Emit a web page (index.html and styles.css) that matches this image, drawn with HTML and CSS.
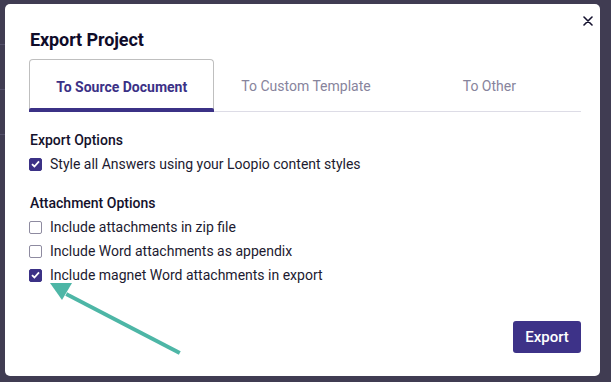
FILE: index.html
```html
<!DOCTYPE html>
<html>
<head>
<meta charset="utf-8">
<link rel="stylesheet" href="styles.css">
</head>
<body>
<div class="backdrop">
  <div class="side">
    <span class="side-row"></span>
    <span class="side-row"></span>
    <span class="side-row"></span>
  </div>
  <div class="modal">
    <button class="close" aria-label="Close">
      <svg width="10" height="10" viewBox="0 0 10 10"><path d="M1 1 L9 9 M9 1 L1 9" stroke="#14112e" stroke-width="1.6" stroke-linecap="round"/></svg>
    </button>
    <h1 class="title">Export Project</h1>
    <div class="tabs">
      <div class="tab active">To Source Document</div>
      <div class="tab">To Custom Template</div>
      <div class="tab">To Other</div>
    </div>
    <div class="section">
      <h2 class="section-title">Export Options</h2>
      <label class="option"><span class="box checked"><svg width="9" height="8" viewBox="0 0 9 8"><path d="M1 4.2 L3.4 6.5 L8 1.3" fill="none" stroke="#fff" stroke-width="1.8"/></svg></span>Style all Answers using your Loopio content styles</label>
    </div>
    <div class="section second">
      <h2 class="section-title">Attachment Options</h2>
      <label class="option"><span class="box"></span>Include attachments in zip file</label>
      <label class="option"><span class="box"></span>Include Word attachments as appendix</label>
      <label class="option"><span class="box checked"><svg width="9" height="8" viewBox="0 0 9 8"><path d="M1 4.2 L3.4 6.5 L8 1.3" fill="none" stroke="#fff" stroke-width="1.8"/></svg></span>Include magnet Word attachments in export</label>
    </div>
    <div class="footer">
      <button class="export">Export</button>
    </div>
    <svg class="arrow" width="140" height="80" viewBox="0 0 140 80">
      <line x1="18" y1="12" x2="128" y2="69" stroke="#4db6a6" stroke-width="4" stroke-linecap="square"/>
      <polygon points="0,0 22,0 12,17" fill="#4db6a6"/>
    </svg>
  </div>
</div>
</body>
</html>
```
FILE: styles.css
```css
* { box-sizing: border-box; }
html, body { margin: 0; padding: 0; }
body {
  background: #403c52;
  font-family: Roboto, "Liberation Sans", sans-serif;
  width: 611px;
  height: 382px;
  overflow: hidden;
}
.backdrop {
  position: relative;
  width: 611px;
  height: 382px;
  padding: 4px 11px 6px 5px;
}
.side {
  position: absolute;
  left: 0;
  top: 0;
  width: 5px;
  height: 382px;
  display: flex;
  flex-direction: column;
  overflow: hidden;
}
.side-row {
  height: 45px;
  border-bottom: 1px solid #54506a;
}
.modal {
  position: relative;
  width: 595px;
  height: 372px;
  background: #fff;
  border-radius: 5px;
  padding: 25px 19px 0 24px;
}
.close {
  position: absolute;
  top: 12px;
  right: 7px;
  width: 10px;
  height: 10px;
  padding: 0;
  border: 0;
  background: none;
  display: flex;
}
.title {
  margin: 0 0 0 1px;
  font-size: 18px;
  font-weight: 700;
  color: #0f0c29;
  line-height: 22px;
  letter-spacing: -0.1px;
}
.tabs {
  margin-top: 8px;
  display: flex;
  width: 552px;
  border-bottom: 1px solid #dddce6;
  height: 53px;
}
.tab {
  flex: 1;
  display: flex;
  align-items: center;
  justify-content: center;
  font-size: 14px;
  color: #87849c;
  padding-top: 2px;
}
.tab.active {
  position: relative;
  border: 1px solid #bfbfbf;
  border-bottom: 0;
  border-radius: 4px 4px 0 0;
  color: #3b3186;
  font-weight: 700;
}
.tab.active::after {
  content: "";
  position: absolute;
  left: -1px;
  right: -1px;
  bottom: -1px;
  height: 4px;
  background: #3b3186;
  border-radius: 2px 2px 0 0;
}
.section { margin-top: 20px; margin-left: 1px; }
.section.second { margin-top: 19px; }
.section-title {
  margin: 0 0 3px 0;
  font-size: 14px;
  font-weight: 500;
  color: #14112b;
  line-height: 17px;
}
.option {
  display: flex;
  align-items: center;
  gap: 8px;
  font-size: 14px;
  color: #1c1a30;
  height: 24px;
  margin-left: -1px;
}
.box {
  width: 13px;
  height: 13px;
  border: 1px solid #8e8ba0;
  border-radius: 2px;
  display: flex;
  align-items: center;
  justify-content: center;
  background: #fff;
}
.box.checked {
  background: #3b3186;
  border-color: #3b3186;
}
.footer {
  display: flex;
  justify-content: flex-end;
  width: 552px;
  margin-top: 34px;
}
.export {
  width: 68px;
  height: 32px;
  background: #3d3288;
  color: #fff;
  border: 0;
  border-radius: 3px;
  font-family: Roboto, "Liberation Sans", sans-serif;
  font-size: 15px;
  font-weight: 500;
}
.arrow {
  position: absolute;
  left: 45px;
  top: 279px;
}
```
